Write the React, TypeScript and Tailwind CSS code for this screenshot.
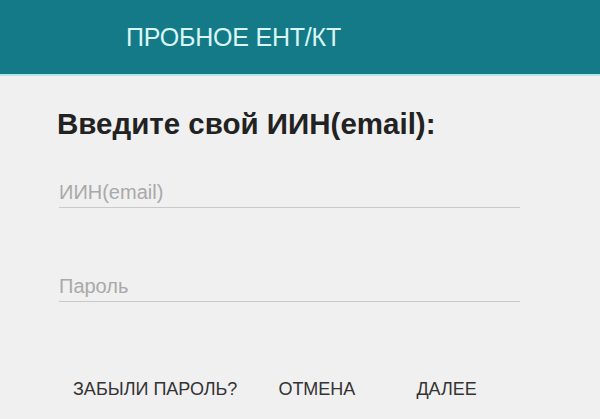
export default function App() {
    return (
        <div className="min-h-screen w-full bg-[#f0f0f0] font-['Liberation_Sans',Arial,sans-serif]">
            {/* Top bar */}
            <header className="h-[76px] bg-[#157a88] border-b-2 border-[#b3e4e8] flex items-center pl-[126px]">
                <span className="text-[25px] leading-none text-[#d9f6f5] tracking-[-0.2px]">ПРОБНОЕ ЕНТ/КТ</span>
            </header>

            <main className="flex flex-col">
                <h1 className="mt-[33px] pl-[57px] text-[29.5px] leading-none font-bold text-[#222222]">
                    Введите свой ИИН(email):
                </h1>

                <div className="mt-[39px] pl-[59px] flex flex-col gap-[64px]">
                    <input
                        type="text"
                        placeholder="ИИН(email)"
                        className="w-[461px] h-[30px] bg-transparent border-b border-[#c9c9c9] text-[20px] text-[#333333] placeholder:text-[#a9a9a9] outline-none"
                    />
                    <input
                        type="password"
                        placeholder="Пароль"
                        className="w-[461px] h-[30px] bg-transparent border-b border-[#c9c9c9] text-[20px] text-[#333333] placeholder:text-[#a9a9a9] outline-none"
                    />
                </div>

                {/* Actions */}
                <div className="mt-[78px] pl-[73px] flex items-center text-[18px] leading-none text-[#333333]">
                    <button className="leading-none">ЗАБЫЛИ ПАРОЛЬ?</button>
                    <button className="ml-[41px] leading-none">ОТМЕНА</button>
                    <button className="ml-[61px] leading-none">ДАЛЕЕ</button>
                </div>
            </main>
        </div>
    );
}
